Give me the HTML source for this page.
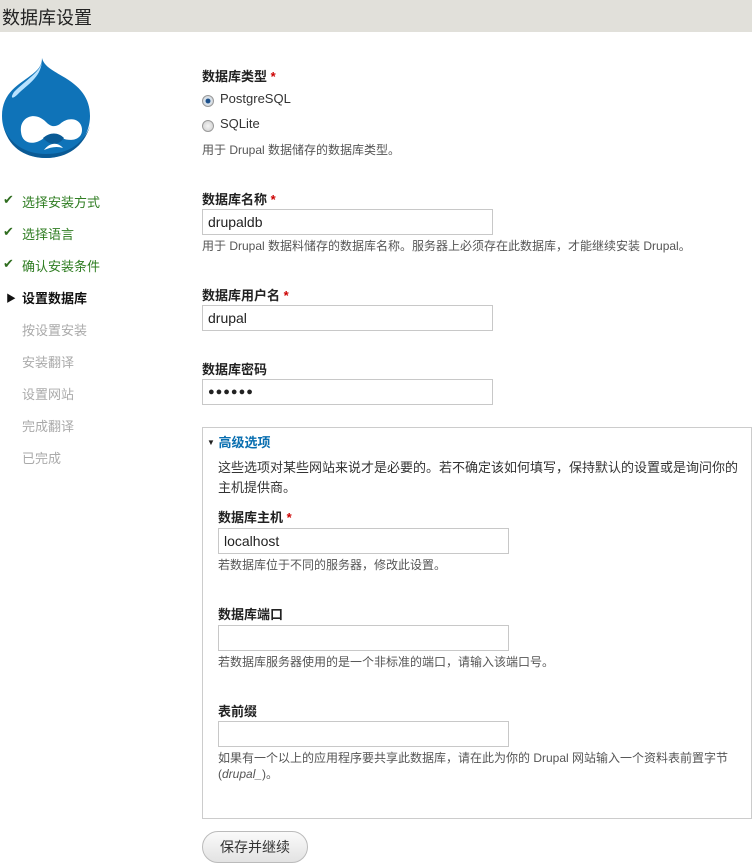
<!DOCTYPE html>
<html><head><meta charset="utf-8">
<style>
*{margin:0;padding:0;box-sizing:border-box}
body{width:752px;height:864px;background:#fff;position:relative;overflow:hidden;font-family:"Liberation Sans","Noto Sans CJK SC",sans-serif;font-size:13px;color:#333}
.hdr{position:absolute;left:0;top:0;width:752px;height:32px;background:#e1e0da}
.hdr span{position:absolute;left:2px;top:4px;font-size:18px;color:#222}
.a{position:absolute;white-space:nowrap}
.nav{font-size:13px}
.ok{color:#2f7d22}
.ok::before{content:"✔";position:absolute;left:-19px;top:0;color:#2f6d1f;font-size:13px}
.cur{color:#111;font-weight:bold}
.dis{color:#aaa}
.lbl{font-weight:bold;color:#222;font-size:13px}
.req{color:#c00}
.desc{font-size:12px;color:#555}
.inp{position:absolute;border:1px solid #c8c8c8;background:#fff;height:26px;font-size:14px;color:#222;padding:3px 5px;line-height:18px}
.radio{position:absolute;width:12px;height:12px;border-radius:50%;border:1px solid #999;background:radial-gradient(#f4f4f4,#ccc)}
.radio.on{background:radial-gradient(#1b4f8a 30%,#dde6ef 40%,#ccc)}
.fs{position:absolute;left:202px;top:427px;width:550px;height:392px;border:1px solid #ccc}
.btn{position:absolute;left:202px;top:831px;width:106px;height:32px;border:1px solid #bbb;border-radius:16px;background:linear-gradient(#fafafa,#e3e3e3);font-size:14px;color:#333;text-align:center;line-height:30px}
</style></head><body>
<div class="hdr"><span>数据库设置</span></div>
<svg class="a" style="left:0;top:55px" width="94" height="106" viewBox="0 55 94 106">
<path d="M42 58 C44 66 52 70 62 76 C80 86 90 98 90 116 C90 140 70 158 46 158 C22 158 2 140 2 116 C2 92 20 84 30 76 C38 70 42 66 42 58Z" fill="#0f73b8"/>
<path d="M42 62 C40 72 26 80 14 92 C10 98 12 100 18 94 C28 84 40 78 42 62Z" fill="#b8e2ff"/>
<path d="M4 128 C10 150 28 158 46 158 C68 158 84 146 90 126 C82 146 66 154 46 154 C26 154 10 144 4 128Z" fill="#0a5a95"/>
<path d="M21 132 C19 118 34 110 46 122 C50 126 54 128 60 124 C68 116 82 118 82 130 C82 140 70 142 62 138 C56 134 50 134 44 138 C34 146 22 144 21 132Z" fill="#fff"/>
<path d="M43 138 C50 132 58 132 64 138 C58 146 50 146 43 138Z" fill="#0a5a95"/>
<path d="M44 150 C50 142 58 142 63 148 C57 146 51 147 44 150Z" fill="#fff"/>
</svg>
<div class="a nav ok" style="left:22px;top:192px">选择安装方式</div>
<div class="a nav ok" style="left:22px;top:224px">选择语言</div>
<div class="a nav ok" style="left:22px;top:256px">确认安装条件</div>
<div class="a nav cur" style="left:22px;top:288px"><span style="position:absolute;left:-16px;font-size:10px;top:2px">▶</span>设置数据库</div>
<div class="a nav dis" style="left:22px;top:320px">按设置安装</div>
<div class="a nav dis" style="left:22px;top:352px">安装翻译</div>
<div class="a nav dis" style="left:22px;top:384px">设置网站</div>
<div class="a nav dis" style="left:22px;top:416px">完成翻译</div>
<div class="a nav dis" style="left:22px;top:448px">已完成</div>

<div class="a lbl" style="left:202px;top:66px">数据库类型 <span class="req">*</span></div>
<div class="radio on" style="left:202px;top:95px"></div>
<div class="a" style="left:220px;top:91px;font-size:13px">PostgreSQL</div>
<div class="radio" style="left:202px;top:120px"></div>
<div class="a" style="left:220px;top:116px;font-size:13px">SQLite</div>
<div class="a desc" style="left:202px;top:141px">用于 Drupal 数据储存的数据库类型。</div>

<div class="a lbl" style="left:202px;top:189px">数据库名称 <span class="req">*</span></div>
<div class="inp" style="left:202px;top:209px;width:291px">drupaldb</div>
<div class="a desc" style="left:202px;top:237px">用于 Drupal 数据料储存的数据库名称。服务器上必须存在此数据库，才能继续安装 Drupal。</div>

<div class="a lbl" style="left:202px;top:285px">数据库用户名 <span class="req">*</span></div>
<div class="inp" style="left:202px;top:305px;width:291px">drupal</div>

<div class="a lbl" style="left:202px;top:359px">数据库密码</div>
<div class="inp" style="left:202px;top:379px;width:291px;font-size:11px;letter-spacing:1px">●●●●●●</div>

<div class="fs"></div>
<div class="a" style="left:207px;top:432px;color:#0a6fb0;font-weight:bold;font-size:13px"><span style="font-size:8px;color:#222;position:relative;top:-2px">▼</span> 高级选项</div>
<div class="a" style="left:218px;top:458px;font-size:13px;color:#333;line-height:20px">这些选项对某些网站来说才是必要的。若不确定该如何填写，保持默认的设置或是询问你的<br>主机提供商。</div>
<div class="a lbl" style="left:218px;top:507px">数据库主机 <span class="req">*</span></div>
<div class="inp" style="left:218px;top:528px;width:291px">localhost</div>
<div class="a desc" style="left:218px;top:556px">若数据库位于不同的服务器，修改此设置。</div>
<div class="a lbl" style="left:218px;top:604px">数据库端口</div>
<div class="inp" style="left:218px;top:625px;width:291px"></div>
<div class="a desc" style="left:218px;top:653px">若数据库服务器使用的是一个非标准的端口，请输入该端口号。</div>
<div class="a lbl" style="left:218px;top:701px">表前缀</div>
<div class="inp" style="left:218px;top:721px;width:291px"></div>
<div class="a desc" style="left:218px;top:750px;line-height:16px">如果有一个以上的应用程序要共享此数据库，请在此为你的 Drupal 网站输入一个资料表前置字节<br>(<i>drupal_</i>)。</div>

<div class="btn">保存并继续</div>
</body></html>
